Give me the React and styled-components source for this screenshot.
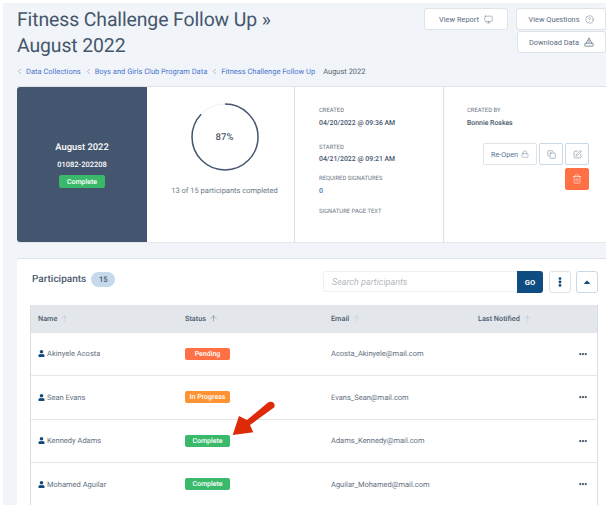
import React from "react";
import styled, { createGlobalStyle } from "styled-components";
import { ChevronLeft, Monitor, CircleHelp, Lock, Copy, SquarePen, Trash2, ArrowUp } from "lucide-react";
import { FaUser, FaEllipsisH, FaEllipsisV, FaCaretUp } from "react-icons/fa";

const GlobalStyle = createGlobalStyle`
  html, body {
    margin: 0;
    padding: 0;
    background: #ffffff;
    font-family: Roboto, "Liberation Sans", sans-serif;
    text-rendering: geometricPrecision;
  }
`;

const Frame = styled.div`
  position: relative;
  width: 612px;
  height: 512px;
  overflow: hidden;
  padding: 3px 6px 7px 3px;
  box-sizing: border-box;
`;

const Shell = styled.div`
  height: 100%;
  box-sizing: border-box;
  padding: 4px 0 0 14px;
  background: #f1f4f8;
  overflow: hidden;
`;

const Header = styled.div`
  display: flex;
  justify-content: space-between;
  height: 79px;
`;

const Title = styled.h1`
  margin: 0;
  font-size: 19.4px;
  letter-spacing: -0.1px;
  line-height: 26px;
  font-weight: 400;
  color: #44566c;
`;

const Crumbs = styled.div`
  display: flex;
  align-items: center;
  margin: 5px 0 0 -2px;
  height: 14px;
  font-size: 7.5px;
  white-space: nowrap;
  color: #5a6775;
`;

const Crumb = styled.a`
  color: #4a76d0;
  margin: 0 3px 0 2px;
`;

const Current = styled.span`
  margin-left: 5px;
`;

const Actions = styled.div`
  display: flex;
  gap: 8px;
  padding-top: 1px;
`;

const ActionStack = styled.div`
  display: flex;
  flex-direction: column;
  align-items: flex-end;
  gap: 1px;
`;

const ActionButton = styled.button`
  display: flex;
  align-items: center;
  justify-content: center;
  gap: 5px;
  box-sizing: border-box;
  width: ${(p) => p.$width}px;
  height: ${(p) => p.$height || 22}px;
  padding: 0;
  background: #ffffff;
  border: 1px solid #dfe2e6;
  border-radius: 3px;
  font-family: inherit;
  font-size: 7.4px;
  color: #5a6b80;
`;

const SummaryCard = styled.section`
  display: grid;
  grid-template-columns: 130px 148px 149px 1fr;
  height: 157px;
  background: #ffffff;
  border-top: 1px solid #dfe2e6;
  border-bottom: 1px solid #e6e8ec;
  box-sizing: border-box;
`;

const BatchPanel = styled.div`
  display: flex;
  flex-direction: column;
  align-items: center;
  justify-content: center;
  box-sizing: border-box;
  background: #44566f;
  border-radius: 3px 0 0 3px;
  color: #ffffff;
`;

const BatchName = styled.div`
  font-size: 9.4px;
  font-weight: 500;
  line-height: 14px;
`;

const BatchCode = styled.div`
  margin: 5px 0 5px;
  font-size: 7.5px;
  font-weight: 500;
  line-height: 10px;
`;

const Badge = styled.span`
  display: inline-flex;
  align-items: center;
  justify-content: center;
  box-sizing: border-box;
  width: ${(p) => p.$width || 45}px;
  height: ${(p) => p.$height || 12}px;
  background: ${(p) => p.$color};
  border-radius: 2px;
  color: #ffffff;
  font-size: 7px;
  font-weight: 500;
`;

const ProgressPanel = styled.div`
  display: flex;
  flex-direction: column;
  align-items: center;
  padding: 16px 0 0 8px;
  border-right: 1px solid #dcdfe3;
`;

const Ring = styled.div`
  position: relative;
  width: 68px;
  height: 68px;
`;

const RingLabel = styled.span`
  position: absolute;
  inset: 0;
  display: flex;
  align-items: center;
  justify-content: center;
  font-size: 9.5px;
  font-weight: 500;
  color: #4a5a6e;
`;

const ProgressText = styled.p`
  margin: 15px 0 0;
  font-size: 7.5px;
  color: #6b7888;
`;

const MetaPanel = styled.div`
  padding: 20px 0 0 ${(p) => p.$left}px;
  border-right: ${(p) => (p.$divider ? "1px solid #dcdfe3" : "none")};
`;

const MetaLabel = styled.div`
  font-size: 5.9px;
  line-height: 8px;
  color: #6c7682;
  text-transform: uppercase;
  margin-bottom: ${(p) => p.$gap ?? 3}px;
`;

const MetaValue = styled.div`
  font-size: 6.9px;
  line-height: 10px;
  font-weight: 500;
  color: ${(p) => p.$color || "#45566b"};
  margin-bottom: ${(p) => p.$gap}px;
`;

const CreatorPanel = styled(MetaPanel)`
  display: flex;
  flex-direction: column;
  padding-right: 17px;
`;

const Tools = styled.div`
  display: flex;
  flex-wrap: wrap;
  justify-content: flex-end;
  gap: 3px 2px;
  margin-top: 15px;
  margin-left: 16px;
`;

const ToolButton = styled.button`
  display: flex;
  align-items: center;
  justify-content: center;
  gap: 3px;
  box-sizing: border-box;
  width: ${(p) => p.$width || 24}px;
  height: 22px;
  padding: 0;
  background: ${(p) => (p.$danger ? "#ff7144" : "#ffffff")};
  border: 1px solid ${(p) => (p.$danger ? "#ff7144" : p.$plain ? "#dfe2e6" : "#c9d9ea")};
  border-radius: 2px;
  font-family: inherit;
  font-size: 7.2px;
  color: ${(p) => (p.$danger ? "#ffffff" : "#5a7191")};
`;

const ParticipantsCard = styled.section`
  margin-top: 15px;
  height: 260px;
  padding: 12px 8px 0 13px;
  box-sizing: border-box;
  background: #ffffff;
  border-top: 1px solid #dfe2e6;
  border-radius: 3px 0 0 0;
`;

const CardBar = styled.div`
  display: flex;
  align-items: center;
  height: 22px;
`;

const CardTitle = styled.h2`
  margin: 0 0 6px 2px;
  font-size: 10px;
  font-weight: 500;
  color: #4a5a6e;
`;

const CountPill = styled.span`
  display: inline-flex;
  align-items: center;
  justify-content: center;
  width: 24px;
  height: 15px;
  margin: 0 0 5px 5px;
  background: #c5d8ec;
  border-radius: 8px;
  font-size: 7.6px;
  font-weight: 500;
  color: #44566c;
`;

const SearchGroup = styled.div`
  display: flex;
  margin-left: auto;
  height: 22px;
`;

const SearchInput = styled.input`
  width: 194px;
  height: 21px;
  box-sizing: border-box;
  padding: 0 8px;
  border: 1px solid #eceef1;
  border-right: none;
  border-radius: 3px 0 0 3px;
  outline: none;
  font-family: inherit;
  font-size: 9px;
  &::placeholder {
    color: #b4b8be;
    font-style: italic;
    opacity: 1;
  }
`;

const GoButton = styled.button`
  width: 26px;
  height: 22px;
  padding: 0;
  background: #0f4c81;
  border: none;
  border-radius: 0 3px 3px 0;
  color: #ffffff;
  font-family: inherit;
  font-size: 7.6px;
  font-weight: 700;
`;

const IconButton = styled.button`
  display: flex;
  align-items: center;
  justify-content: center;
  width: 22px;
  height: 22px;
  padding: 0;
  margin-left: ${(p) => p.$left}px;
  background: #ffffff;
  border: 1px solid ${(p) => p.$border};
  border-radius: 3px;
  color: #134a7c;
  font-size: 10px;
`;

const Table = styled.div`
  margin-top: 12px;
  border-left: 1px solid #d9dce0;
  border-right: 1px solid #d9dce0;
`;

const Columns = styled.div`
  display: grid;
  grid-template-columns: 147px 146px 147px 101px 1fr;
  align-items: center;
  padding-left: 7px;
`;

const HeadRow = styled(Columns)`
  height: 27.5px;
  background: #e3e6ea;
  font-size: 7.3px;
  font-weight: 500;
  color: #4a5a6e;
`;

const HeadCell = styled.span`
  display: flex;
  align-items: center;
  gap: 3px;
  color: inherit;
`;

const Row = styled(Columns)`
  height: 43.5px;
  border-bottom: 1px solid #e4e6ea;
  box-sizing: border-box;
  font-size: 7.5px;
  color: #647080;
`;

const NameCell = styled.span`
  display: flex;
  align-items: center;
  gap: 2px;
  font-size: 7.5px;
  color: #647080;
`;

const PersonIcon = styled(FaUser)`
  width: 7px;
  height: 7px;
  color: #134a7c;
`;

const RowMenu = styled.span`
  display: flex;
  font-size: 8px;
  color: #4a5a6e;
`;

const Pointer = styled.svg`
  position: absolute;
  left: 230px;
  top: 400px;
`;

const statusColors = {
  Pending: "#ff7144",
  "In Progress": "#ff9233",
  Complete: "#3bb96b",
};

const participants = [
  { name: "Akinyele Acosta", status: "Pending", email: "Acosta_Akinyele@mail.com" },
  { name: "Sean Evans", status: "In Progress", email: "Evans_Sean@mail.com" },
  { name: "Kennedy Adams", status: "Complete", email: "Adams_Kennedy@mail.com" },
  { name: "Mohamed Aguilar", status: "Complete", email: "Aguilar_Mohamed@mail.com" },
];

const headings = [
  { label: "Name", arrow: "#b9c2cc" },
  { label: "Status", arrow: "#56677b" },
  { label: "Email", arrow: "#b9c2cc" },
  { label: "Last Notified", arrow: "#b9c2cc" },
];

const crumbs = ["Data Collections", "Boys and Girls Club Program Data", "Fitness Challenge Follow Up"];

// tray with a triangle on it, not in lucide
const DownloadIcon = () => (
  <svg width="10" height="10" viewBox="0 0 12 12" fill="none" stroke="#5a6b80" strokeWidth="0.9">
    <path d="M6 1 L2.6 7.5 M6 1 L9.4 7.5" />
    <rect x="1" y="7.5" width="10" height="3.5" rx="0.6" />
    <path d="M6 3.5 V6.5" />
  </svg>
);

const ProgressRing = ({ percent }) => {
  const radius = 33;
  const length = 2 * Math.PI * radius;
  return (
    <Ring>
      <svg width="68" height="68" viewBox="0 0 68 68">
        <g transform="rotate(-90 34 34)" fill="none" strokeWidth="1.5">
          <circle cx="34" cy="34" r={radius} stroke="#f4f5f7" />
          <circle
            cx="34"
            cy="34"
            r={radius}
            stroke="#44566f"
            strokeDasharray={`${(length * percent) / 100} ${length}`}
          />
        </g>
      </svg>
      <RingLabel>{percent}%</RingLabel>
    </Ring>
  );
};

export default function App() {
  return (
    <Frame>
      <GlobalStyle />
      <Shell>
        <Header>
          <div>
            <Title>
              Fitness Challenge Follow Up »
              <br />
              August 2022
            </Title>
            <Crumbs>
              {crumbs.map((c) => (
                <React.Fragment key={c}>
                  <ChevronLeft size={9} color="#7d8894" strokeWidth={1.4} />
                  <Crumb>{c}</Crumb>
                </React.Fragment>
              ))}
              <Current>August 2022</Current>
            </Crumbs>
          </div>
          <Actions>
            <ActionButton $width={84}>
              View Report <Monitor size={9} strokeWidth={1.2} />
            </ActionButton>
            <ActionStack>
              <ActionButton $width={90}>
                View Questions <CircleHelp size={9} strokeWidth={1.2} />
              </ActionButton>
              <ActionButton $width={89} $height={22}>
                Download Data <DownloadIcon />
              </ActionButton>
            </ActionStack>
          </Actions>
        </Header>

        <SummaryCard>
          <BatchPanel>
            <BatchName>August 2022</BatchName>
            <BatchCode>01082-202208</BatchCode>
            <Badge $color={statusColors.Complete} $width={46} $height={13}>
              Complete
            </Badge>
          </BatchPanel>
          <ProgressPanel>
            <ProgressRing percent={87} />
            <ProgressText>13 of 15 participants completed</ProgressText>
          </ProgressPanel>
          <MetaPanel $left={24} $divider>
            <MetaLabel>Created</MetaLabel>
            <MetaValue $gap={16}>04/20/2022 @ 09:36 AM</MetaValue>
            <MetaLabel $gap={2}>Started</MetaLabel>
            <MetaValue $gap={11}>04/21/2022 @ 09:21 AM</MetaValue>
            <MetaLabel>Required Signatures</MetaLabel>
            <MetaValue $gap={12} $color="#4a76b0">
              0
            </MetaValue>
            <MetaLabel>Signature Page Text</MetaLabel>
          </MetaPanel>
          <CreatorPanel $left={23}>
            <MetaLabel>Created By</MetaLabel>
            <MetaValue>Bonnie Roskes</MetaValue>
            <Tools>
              <ToolButton $width={54} $plain>
                Re-Open <Lock size={8} strokeWidth={1.2} />
              </ToolButton>
              <ToolButton>
                <Copy size={9} strokeWidth={1.3} />
              </ToolButton>
              <ToolButton>
                <SquarePen size={9} strokeWidth={1.3} />
              </ToolButton>
              <ToolButton $danger>
                <Trash2 size={10} strokeWidth={1.3} />
              </ToolButton>
            </Tools>
          </CreatorPanel>
        </SummaryCard>

        <ParticipantsCard>
          <CardBar>
            <CardTitle>Participants</CardTitle>
            <CountPill>15</CountPill>
            <SearchGroup>
              <SearchInput placeholder="Search participants" />
              <GoButton>GO</GoButton>
            </SearchGroup>
            <IconButton $left={6} $border="#dfe2e6">
              <FaEllipsisV />
            </IconButton>
            <IconButton $left={5} $border="#c9d9ea">
              <FaCaretUp />
            </IconButton>
          </CardBar>
          <Table>
            <HeadRow>
              {headings.map((h) => (
                <HeadCell key={h.label}>
                  {h.label} <ArrowUp size={9} color={h.arrow} strokeWidth={1.2} />
                </HeadCell>
              ))}
            </HeadRow>
            {participants.map((p) => (
              <Row key={p.name}>
                <NameCell>
                  <PersonIcon /> {p.name}
                </NameCell>
                <span>
                  <Badge $color={statusColors[p.status]}>{p.status}</Badge>
                </span>
                <span>{p.email}</span>
                <span />
                <RowMenu>
                  <FaEllipsisH />
                </RowMenu>
              </Row>
            ))}
          </Table>
        </ParticipantsCard>
      </Shell>
      <Pointer width="48" height="38" viewBox="0 0 48 38">
        <path
          d="M2.7 35 L9 16 L17 20 L38 2.5 C42 0 46.5 4 44 7.5 L20 25 L23.3 32.3 Z"
          fill="#dd2a08"
        />
      </Pointer>
    </Frame>
  );
}
